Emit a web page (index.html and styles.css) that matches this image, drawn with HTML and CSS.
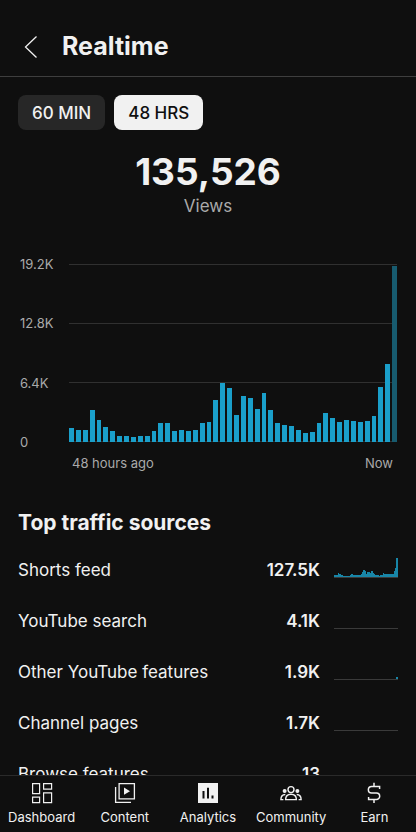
FILE: index.html
```html
<!DOCTYPE html>
<html lang="en">
<head>
    <meta charset="UTF-8">
    <meta name="viewport" content="width=device-width, initial-scale=1.0">
    <title>Realtime</title>
    <link rel="stylesheet" href="styles.css">
</head>
<body>
<header class="header">
    <button type="button" class="back" aria-label="Back">
        <svg width="14" height="24" viewBox="0 0 14 24" fill="none" stroke="currentColor" stroke-width="1.3"><path d="M12.5 1.5 1.5 12l11 10.5"/></svg>
    </button>
    <h1>Realtime</h1>
</header>

<main class="content">
    <div class="chips">
        <button type="button" class="chip">60 MIN</button>
        <button type="button" class="chip active">48 HRS</button>
    </div>

    <div class="total">
        <div class="total-value">135,526</div>
        <div class="total-label">Views</div>
    </div>

    <div class="chart">
        <div class="y-axis">
            <span>19.2K</span>
            <span>12.8K</span>
            <span>6.4K</span>
            <span>0</span>
        </div>
        <div class="plot" id="plot"></div>
        <div class="x-axis">
            <span>48 hours ago</span>
            <span>Now</span>
        </div>
    </div>

    <h2>Top traffic sources</h2>
    <ul class="sources">
        <li>
            <span class="name">Shorts feed</span>
            <span class="value">127.5K</span>
            <div class="spark" id="spark-shorts"></div>
        </li>
        <li>
            <span class="name">YouTube search</span>
            <span class="value">4.1K</span>
            <div class="spark"></div>
        </li>
        <li>
            <span class="name">Other YouTube features</span>
            <span class="value">1.9K</span>
            <div class="spark" id="spark-other"></div>
        </li>
        <li>
            <span class="name">Channel pages</span>
            <span class="value">1.7K</span>
            <div class="spark"></div>
        </li>
        <li>
            <span class="name">Browse features</span>
            <span class="value">13</span>
            <div class="spark"></div>
        </li>
    </ul>
</main>

<nav class="tabs">
    <a href="#">
        <svg width="24" height="24" viewBox="0 0 24 24" fill="none" stroke="currentColor" stroke-width="1.2"><path d="M2.6 2.6h7v10h-7zM13.6 2.6h8v5.6h-8zM2.6 16.2h7v5.4h-7zM13.6 11.8h8v9.8h-8z"/></svg>
        Dashboard
    </a>
    <a href="#">
        <svg width="24" height="24" viewBox="0 0 24 24" fill="none" stroke="currentColor" stroke-width="1.3"><path d="M6.1 2.6h15.3v15.3H6.1zM2.6 6v15.4H18"/><path d="M11 6.6v7.2l6-3.6z" fill="currentColor" stroke="none"/></svg>
        Content
    </a>
    <a href="#" aria-current="page">
        <svg width="24" height="24" viewBox="0 0 24 24"><path d="M2 2h20v20H2z" fill="currentColor"/><path d="M6.5 10h2v7.5h-2zM11 6.8h2v10.7h-2zM15.5 14.5h2v3h-2z" fill="#0f0f0f"/></svg>
        Analytics
    </a>
    <a href="#">
        <svg width="24" height="24" viewBox="0 0 24 24" fill="none" stroke="currentColor" stroke-width="1.4"><circle cx="12" cy="8.6" r="3"/><path d="M6.6 18.6c0-3.6 2.2-5.4 5.4-5.4s5.4 1.8 5.4 5.4z"/><circle cx="5.6" cy="10" r="2" fill="currentColor" stroke="none"/><circle cx="18.4" cy="10" r="2" fill="currentColor" stroke="none"/><path d="M4.4 18.6H1.9c0-3.4 1.2-5 4.4-5.1M19.6 18.6h2.5c0-3.4-1.2-5-4.4-5.1"/></svg>
        Community
    </a>
    <a href="#">
        <svg width="24" height="24" viewBox="0 0 24 24" fill="none" stroke="currentColor" stroke-width="1.5"><path d="M17.6 8V5.4h-8a3.2 3.2 0 0 0 0 6.5h4.8a3.2 3.2 0 0 1 0 6.6H6.6V16M12 1.8v3.6M12 18.5v3.6"/></svg>
        Earn
    </a>
</nav>

<script src="script.js"></script>
</body>
</html>
```

FILE: styles.css
```css
* {
    box-sizing: border-box;
}
body {
    display: flex;
    flex-direction: column;
    height: 100vh;
    margin: 0;
    background: #0f0f0f;
    color: #f1f1f1;
    font-family: Inter, "Liberation Sans", sans-serif;
}
button {
    border: none;
    font-family: inherit;
    cursor: pointer;
}
.header {
    display: flex;
    align-items: center;
    gap: 18px;
    padding: 30px 18px 13px;
    border-bottom: 1px solid #3e3e3e;
}
.header h1 {
    margin: 0;
    font-size: 25px;
    line-height: 33px;
    font-weight: 700;
}
.back {
    display: flex;
    padding: 0 6px;
    background: none;
    color: inherit;
}
.content {
    flex: 1;
    min-height: 0;
    padding: 18px 18px 0;
    overflow-y: auto;
    scrollbar-width: none;
}
.chips {
    display: flex;
    gap: 9px;
}
.chip {
    height: 35px;
    padding: 0 14px;
    border-radius: 8px;
    background: #272727;
    color: #f1f1f1;
    font-size: 17px;
    font-weight: 500;
}
.chip.active {
    background: #f1f1f1;
    color: #0f0f0f;
}
.total {
    margin-top: 20px;
    text-align: center;
}
.total-value {
    font-size: 37px;
    line-height: 44px;
    font-weight: 700;
}
.total-label {
    color: #aaa;
    font-size: 17px;
    line-height: 24px;
}
.chart {
    display: grid;
    grid-template-columns: 51px 1fr;
    margin-top: 46px;
    color: #aaa;
    font-size: 13px;
    line-height: 16px;
}
.y-axis {
    display: flex;
    flex-direction: column;
    justify-content: space-between;
    margin: -8px 0;
    padding-left: 2px;
}
.plot {
    display: flex;
    align-items: flex-end;
    gap: 2px;
    height: 178px;
    margin-right: 1px;
    background: repeating-linear-gradient(#303030 0 1px, transparent 1px 59px);
}
.bar {
    flex: 1;
    background: #1a9fca;
}
.plot .bar:last-child {
    background: #175b6f;
}
.x-axis {
    grid-column: 2;
    display: flex;
    justify-content: space-between;
    margin-top: 13px;
    padding: 0 5px 0 3px;
}
h2 {
    margin: 40px 0 9px;
    font-size: 21px;
    line-height: 24px;
    font-weight: 700;
}
.sources {
    margin: 0;
    padding: 0;
    list-style: none;
}
.sources li {
    display: flex;
    align-items: center;
    height: 51px;
    font-size: 17px;
}
.name {
    flex: 1;
}
.value {
    font-weight: 600;
}
.spark {
    display: flex;
    align-items: flex-end;
    width: 64px;
    height: 20px;
    margin: 0 0 4px 14px;
    border-bottom: 1px solid #3a3a3a;
}
.spark .bar {
    background: #1886a8;
}
.tabs {
    display: grid;
    grid-template-columns: repeat(5, 1fr);
    height: 57px;
    border-top: 1px solid #2a2a2a;
}
.tabs a {
    display: flex;
    flex-direction: column;
    align-items: center;
    gap: 4px;
    padding-top: 5px;
    color: #f1f1f1;
    font-size: 13px;
    line-height: 16px;
    text-decoration: none;
}
```

FILE: script.js
```js
// Views per hour in K, oldest first
const max = 19.2;
const views = [
    1.5, 1.3, 1.3, 3.5, 2.4, 1.6, 1.2, 0.7, 0.7, 0.5, 0.7, 0.7,
    1.2, 2.1, 2, 1.2, 1.3, 1.2, 1.3, 2, 2.2, 4.5, 6.4, 5.8,
    2.9, 5, 4.7, 3.6, 5.3, 3.4, 2.1, 1.8, 1.7, 1.3, 1, 1.1,
    2, 3.1, 2.6, 2.2, 2.4, 2.3, 2.2, 2.3, 2.8, 5.9, 8.4, 19
];

function drawBars(id, data) {
    const box = document.getElementById(id);
    data.forEach((value) => {
        const bar = document.createElement('div');
        bar.className = 'bar';
        bar.style.height = (value / max * 100) + '%';
        box.appendChild(bar);
    });
}

drawBars('plot', views);
drawBars('spark-shorts', views);
drawBars('spark-other', views.map((value, i) => i > 46 ? 2 : 0));
```
